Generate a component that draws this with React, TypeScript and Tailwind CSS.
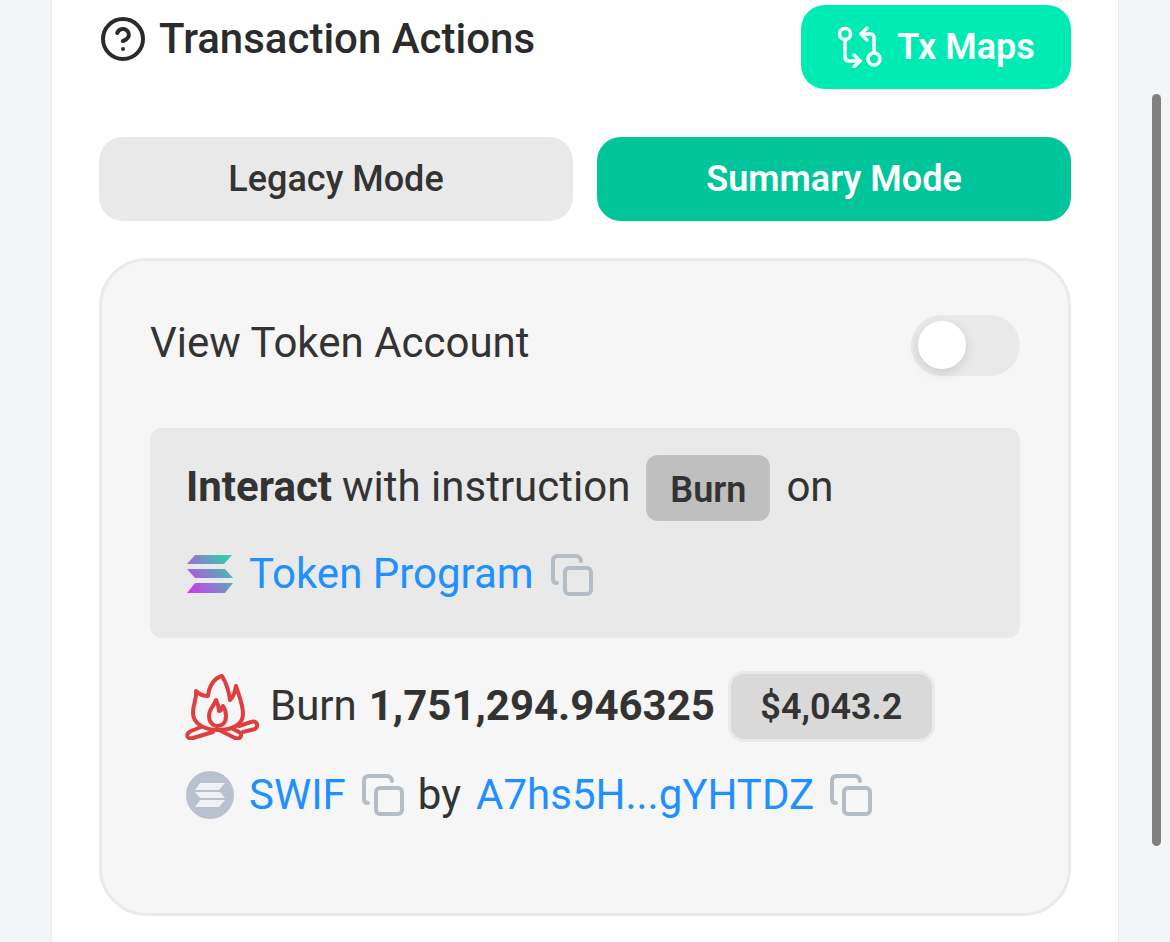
import React from "react";
import { CircleHelp } from "lucide-react";

function TxMapsIcon() {
  return (
    <svg width="46" height="42" viewBox="0 0 46 42" fill="none" stroke="currentColor" strokeWidth="3.5" strokeLinecap="round" strokeLinejoin="round">
      <circle cx="8" cy="8" r="5.5" />
      <path d="M8 14v17q0 4 4 4h11" />
      <path d="M17 29l6 6-6 6" />
      <path d="M24 8h9q4 0 4 4v15" />
      <path d="M30 2l-6 6 6 6" />
      <circle cx="37" cy="33" r="6" />
    </svg>
  );
}

function CopyIcon() {
  return (
    <svg width="42" height="42" viewBox="0 0 42 42" fill="none" stroke="#b4bcc5" strokeWidth="4" strokeLinecap="round" strokeLinejoin="round" className="shrink-0">
      <rect x="14" y="14" width="26" height="26" rx="4" />
      <path d="M6 29q-4 0-4-4V7q0-5 5-5h18q4 0 5 5" />
    </svg>
  );
}

function SolanaLogo() {
  return (
    <svg width="48" height="40" viewBox="0 0 48 40" className="shrink-0">
      <defs>
        <linearGradient id="sol" x1="0" y1="40" x2="48" y2="0" gradientUnits="userSpaceOnUse">
          <stop offset="0" stopColor="#d432f5" />
          <stop offset="0.5" stopColor="#7f88c8" />
          <stop offset="1" stopColor="#14e8a2" />
        </linearGradient>
      </defs>
      <path d="M9 1h37l-8 9H1z" fill="url(#sol)" />
      <path d="M1 15h38l8 9H9z" fill="url(#sol)" />
      <path d="M9 29h38l-8 10H1z" fill="url(#sol)" />
    </svg>
  );
}

function GreySolana() {
  return (
    <svg width="48" height="48" viewBox="0 0 48 48" className="shrink-0">
      <circle cx="24" cy="24" r="24" fill="#b8c1cd" />
      <path d="M14 12h25l-6 7H9z" fill="#eef0f3" />
      <path d="M9 21h25l5 6H14z" fill="#eef0f3" />
      <path d="M14 29h25l-6 7H9z" fill="#eef0f3" />
    </svg>
  );
}

function FireIcon() {
  return (
    <svg width="74" height="66" viewBox="0 0 74 66" fill="none" stroke="#de3e3e" strokeWidth="4" strokeLinecap="round" strokeLinejoin="round" className="shrink-0">
      <path d="M37 2C27 5 24 14 23 22C19 22 14 20 11 17C12 24 8 30 8 39C8 50 20 56 33 56C48 56 58 50 58 40C58 30 54 22 51 12C50 18 49 23 45 26C44 18 42 10 37 2z" />
      <path d="M31 26C29 32 24 35 24 42C24 48 28 52 32 52C38 52 41 48 41 42C41 38 40 35 38 32C37 35 35 37 34 37C34 33 33 30 31 26z" />
      <path d="M54 52L66 48C72 46 74 52 70 55L58 58" />
      <path d="M16 53L6 57C0 60 2 66 8 64L28 58" />
      <path d="M36 57L50 64C56 66 58 60 54 58L48 55" />
    </svg>
  );
}

export default function App() {
  return (
    <div className="relative flex h-[942px] w-[1170px] overflow-hidden bg-[#f4f5f6] font-['Roboto',sans-serif] text-[#333333]">
      <div className="ml-[51px] h-full w-[1068px] border-x border-[#e9ebee] bg-white px-[47px] pt-[5px]">
        {/* Header */}
        <div className="flex items-start justify-between">
          <div className="mt-[10px] flex items-center gap-[12px] text-[#2b2b2b]">
            <CircleHelp size={48} strokeWidth={2} />
            <span className="text-[42px] font-medium leading-[48px]">Transaction Actions</span>
          </div>
          <button className="flex h-[84px] w-[270px] items-center justify-center gap-[14px] rounded-[24px] bg-[#00ebb4] text-[36px] font-semibold text-white">
            <TxMapsIcon />
            Tx Maps
          </button>
        </div>

        {/* Mode switch */}
        <div className="mt-[48px] grid grid-cols-2 gap-[24px]">
          <button className="h-[84px] rounded-[24px] bg-[#e9e9e9] text-[36px] font-medium text-[#333333]">Legacy Mode</button>
          <button className="h-[84px] rounded-[24px] bg-[#00c49a] text-[36px] font-semibold text-white">Summary Mode</button>
        </div>

        {/* Actions card */}
        <div className="mt-[37px] h-[658px] rounded-[48px] border-[3px] border-[#e8eaed] bg-[#f6f6f6] px-[48px] pt-[53px]">
          <div className="flex h-[62px] items-center justify-between">
            <span className="pb-[4px] text-[42px] leading-[58px]">View Token Account</span>
            <div className="relative h-[61px] w-[109px] rounded-full bg-[#e9e9e9]">
              <div className="absolute left-[7px] top-[6px] h-[48px] w-[48px] rounded-full bg-white shadow-[0_4px_12px_rgba(0,0,0,0.12)]" />
            </div>
          </div>

          <div className="mt-[52px] h-[210px] rounded-[12px] bg-[#e9e9e9] px-[36px] pt-[27px]">
            <div className="flex h-[66px] items-center text-[42px]">
              <span className="pb-[4px] font-bold">Interact</span>
              <span className="ml-[10px] pb-[4px]">with instruction</span>
              <span className="ml-[16px] flex h-[66px] w-[124px] items-center justify-center rounded-[12px] bg-[#bfbfbf] pt-[4px] text-[36px] font-semibold">Burn</span>
              <span className="ml-[16px] pb-[4px]">on</span>
            </div>
            <div className="mt-[20px] flex h-[66px] items-center">
              <SolanaLogo />
              <span className="ml-[15px] pb-[2px] text-[42px] text-[#1e90ff]">Token Program</span>
              <span className="ml-[17px] pt-[2px]"><CopyIcon /></span>
            </div>
          </div>

          <div className="mt-[33px] flex h-[71px] items-center pl-[35px]">
            <FireIcon />
            <span className="ml-[11px] pb-[2px] text-[42px]">Burn</span>
            <span className="ml-[12px] pb-[2px] text-[42px] font-bold">1,751,294.946325</span>
            <span className="ml-[13px] flex h-[71px] w-[207px] items-center justify-center rounded-[16px] border-[3px] border-[#e8eaed] bg-[#d9d9d9] text-[36px] font-semibold">$4,043.2</span>
          </div>

          <div className="mt-[29px] flex h-[48px] items-center pl-[36px]">
            <GreySolana />
            <span className="ml-[15px] pb-[2px] text-[42px] text-[#1e90ff]">SWIF</span>
            <span className="ml-[16px]"><CopyIcon /></span>
            <span className="ml-[14px] pb-[2px] text-[42px]">by</span>
            <span className="ml-[15px] pb-[2px] text-[42px] text-[#1e90ff]">A7hs5H...gYHTDZ</span>
            <span className="ml-[16px]"><CopyIcon /></span>
          </div>
        </div>
      </div>

      {/* Scrollbar thumb */}
      <div className="absolute left-[1152px] top-[94px] h-[752px] w-[9px] rounded-full bg-[#808080]" />
    </div>
  );
}
